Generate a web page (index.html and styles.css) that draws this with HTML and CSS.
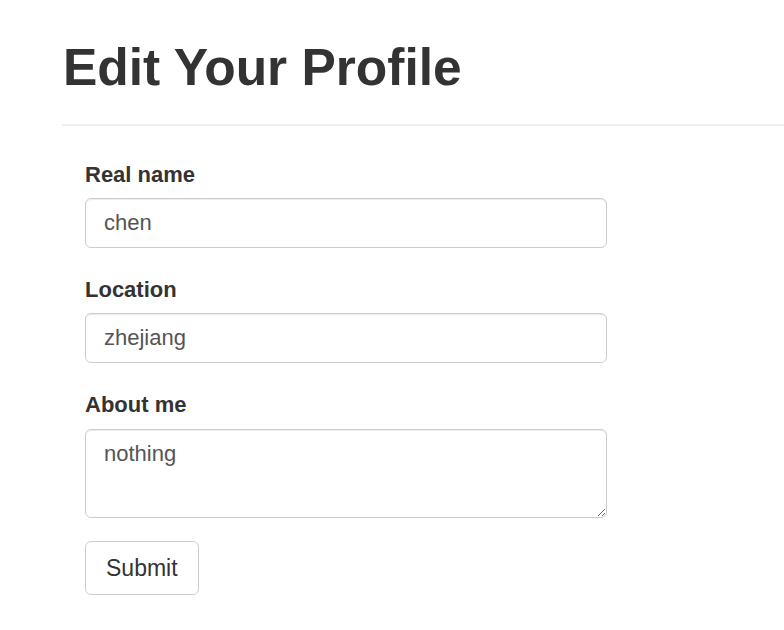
FILE: index.html
```html
<!DOCTYPE html>
<html>
<head>
<meta charset="utf-8">
<link rel="stylesheet" href="styles.css">
</head>
<body>
<div class="page">
  <h1 class="title">Edit Your Profile</h1>
  <hr class="divider">
  <form class="profile-form">
    <div class="form-group">
      <label class="field-label" for="name">Real name</label>
      <input class="form-control" id="name" type="text" value="chen">
    </div>
    <div class="form-group">
      <label class="field-label" for="loc">Location</label>
      <input class="form-control" id="loc" type="text" value="zhejiang">
    </div>
    <div class="form-group form-group-last">
      <label class="field-label field-label-area" for="about">About me</label>
      <textarea class="form-control form-textarea" id="about">nothing</textarea>
    </div>
    <button class="btn" type="button">Submit</button>
  </form>
</div>
</body>
</html>
```
FILE: styles.css
```css
html, body {
  margin: 0;
  padding: 0;
  background: #fff;
}
body {
  font-family: "Liberation Sans", Arial, sans-serif;
  color: #333;
}
.page {
  padding: 39px 0 0 62px;
}
.title {
  margin: 0 0 29px 1px;
  font-size: 51.5px;
  line-height: 56px;
  font-weight: bold;
  color: #333;
}
.divider {
  margin: 0;
  border: 0;
  border-top: 2px solid #eee;
  height: 0;
}
.profile-form {
  padding: 33px 0 0 23px;
  width: 522px;
}
.form-group {
  margin-bottom: 26px;
}
.form-group-last {
  margin-bottom: 23px;
}
.field-label {
  display: block;
  font-size: 22px;
  line-height: 31px;
  font-weight: bold;
  color: #333;
  margin-bottom: 8px;
}
.field-label-area {
  margin-bottom: 9px;
}
.form-control {
  display: block;
  box-sizing: border-box;
  width: 100%;
  height: 50px;
  margin: 0;
  padding: 8px 18px;
  font-family: "Liberation Sans", Arial, sans-serif;
  font-size: 22px;
  line-height: 31px;
  color: #555;
  background: #fff;
  border: 1px solid #ccc;
  border-radius: 6px;
  box-shadow: inset 0 1px 1px rgba(0, 0, 0, 0.075);
  outline: none;
}
.form-textarea {
  height: 89px;
  resize: vertical;
}
.btn {
  display: block;
  box-sizing: border-box;
  height: 54px;
  padding: 0 20px;
  font-family: "Liberation Sans", Arial, sans-serif;
  font-size: 23px;
  color: #333;
  background: #fff;
  border: 1px solid #ccc;
  border-radius: 6px;
  cursor: pointer;
}
```
